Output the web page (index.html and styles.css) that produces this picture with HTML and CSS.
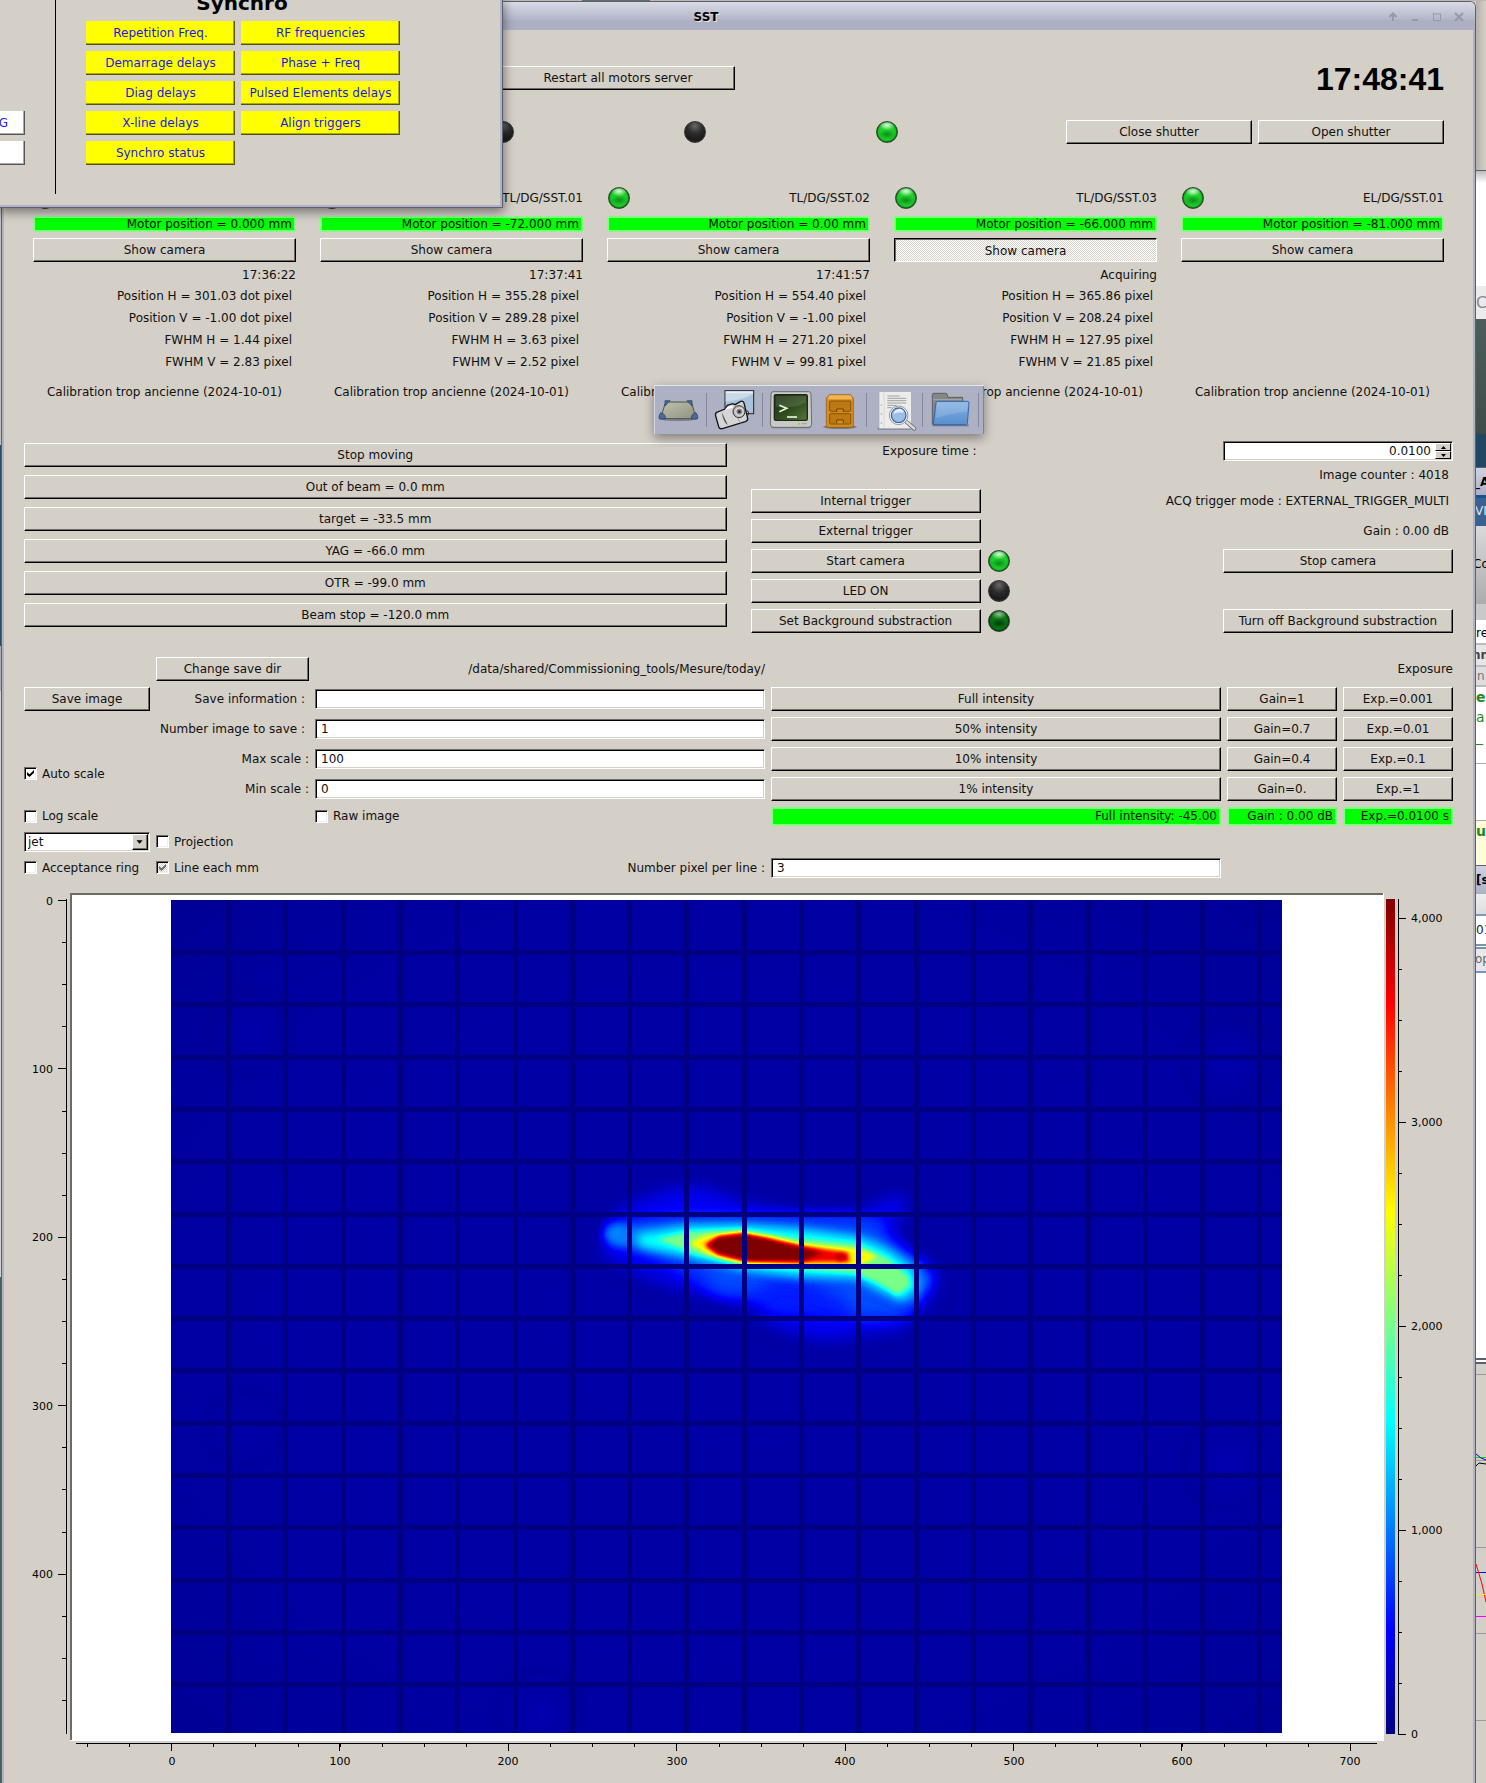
FILE: index.html
```html
<!DOCTYPE html>
<html lang="en">
<head>
<meta charset="utf-8">
<title>SST</title>
<link rel="stylesheet" href="styles.css">
</head>
<body>
<div class="desktop">
  <div class="edge-top"></div>
  <div class="edge-left"></div>

  <main class="window">
    <header class="titlebar">
      <h1 class="title">SST</h1>
      <div class="window-controls">
        <button aria-label="Shade"><svg viewBox="0 0 10 10"><path d="M5 9V2M1.5 5L5 1.5L8.5 5"/></svg></button>
        <button aria-label="Minimize"><svg viewBox="0 0 10 10"><path d="M2 8H8"/></svg></button>
        <button aria-label="Maximize"><svg viewBox="0 0 10 10"><path d="M1.5 1V8.5H8.5V2H1.5" stroke-width="1"/></svg></button>
        <button aria-label="Close"><svg viewBox="0 0 10 10"><path d="M1 1L9 9M9 1L1 9"/></svg></button>
      </div>
    </header>

    <div class="content">
      <section class="status">
        <div class="restart-row">
          <button class="btn restart">Restart all motors server</button>
          <time class="clock">17:48:41</time>
        </div>
        <div class="shutter-row">
          <span class="led led-off at-third"></span>
          <span class="led led-off"></span>
          <span class="led led-on"></span>
          <button class="btn">Close shutter</button>
          <button class="btn">Open shutter</button>
        </div>
        <div class="cameras">
          <article class="camera">
            <div class="camera-head"><span class="led led-off"></span></div>
            <p class="reading">Motor position = 0.000 mm</p>
            <button class="btn">Show camera</button>
            <p class="state">17:36:22</p>
            <p class="measure">Position H = 301.03 dot pixel</p>
            <p class="measure">Position V = -1.00 dot pixel</p>
            <p class="measure">FWHM H = 1.44 pixel</p>
            <p class="measure">FWHM V = 2.83 pixel</p>
            <p class="calibration">Calibration trop ancienne (2024-10-01)</p>
          </article>
          <article class="camera">
            <div class="camera-head"><span class="led led-off"></span><span>TL/DG/SST.01</span></div>
            <p class="reading">Motor position = -72.000 mm</p>
            <button class="btn">Show camera</button>
            <p class="state">17:37:41</p>
            <p class="measure">Position H = 355.28 pixel</p>
            <p class="measure">Position V = 289.28 pixel</p>
            <p class="measure">FWHM H = 3.63 pixel</p>
            <p class="measure">FWHM V = 2.52 pixel</p>
            <p class="calibration">Calibration trop ancienne (2024-10-01)</p>
          </article>
          <article class="camera">
            <div class="camera-head"><span class="led led-on"></span><span>TL/DG/SST.02</span></div>
            <p class="reading">Motor position = 0.00 mm</p>
            <button class="btn">Show camera</button>
            <p class="state">17:41:57</p>
            <p class="measure">Position H = 554.40 pixel</p>
            <p class="measure">Position V = -1.00 pixel</p>
            <p class="measure">FWHM H = 271.20 pixel</p>
            <p class="measure">FWHM V = 99.81 pixel</p>
            <p class="calibration">Calibration trop ancienne (2024-10-01)</p>
          </article>
          <article class="camera">
            <div class="camera-head"><span class="led led-on"></span><span>TL/DG/SST.03</span></div>
            <p class="reading">Motor position = -66.000 mm</p>
            <button class="btn pressed" aria-pressed="true">Show camera</button>
            <p class="state">Acquiring</p>
            <p class="measure">Position H = 365.86 pixel</p>
            <p class="measure">Position V = 208.24 pixel</p>
            <p class="measure">FWHM H = 127.95 pixel</p>
            <p class="measure">FWHM V = 21.85 pixel</p>
            <p class="calibration">Calibration trop ancienne (2024-10-01)</p>
          </article>
          <article class="camera">
            <div class="camera-head"><span class="led led-on"></span><span>EL/DG/SST.01</span></div>
            <p class="reading">Motor position = -81.000 mm</p>
            <button class="btn">Show camera</button>
            <p class="calibration last">Calibration trop ancienne (2024-10-01)</p>
          </article>
        </div>
      </section>

      <section class="controls">
        <div class="positions">
          <button class="btn">Stop moving</button>
          <button class="btn">Out of beam = 0.0 mm</button>
          <button class="btn">target = -33.5 mm</button>
          <button class="btn">YAG = -66.0 mm</button>
          <button class="btn">OTR = -99.0 mm</button>
          <button class="btn">Beam stop = -120.0 mm</button>
        </div>
        <div class="acquisition">
          <label class="text-right" for="exposure">Exposure time :</label>
          <div class="field spinbox c3">
            <input id="exposure" type="text" value="0.0100">
            <div class="spinner">
              <button aria-label="Increase"><svg viewBox="0 0 5 3"><path d="M0 3L2.500 0L5 3z"/></svg></button>
              <button aria-label="Decrease"><svg viewBox="0 0 5 3"><path d="M0 0L2.500 3L5 0z"/></svg></button>
            </div>
          </div>
          <p class="text-right c3">Image counter : 4018</p>
          <button class="btn c1">Internal trigger</button>
          <p class="text-right wide">ACQ trigger mode : EXTERNAL_TRIGGER_MULTI</p>
          <button class="btn c1">External trigger</button>
          <p class="text-right c3">Gain : 0.00 dB</p>
          <button class="btn c1">Start camera</button>
          <span class="led led-on"></span>
          <button class="btn">Stop camera</button>
          <button class="btn c1">LED ON</button>
          <span class="led led-off"></span>
          <button class="btn c1">Set Background substraction</button>
          <span class="led led-dim"></span>
          <button class="btn">Turn off Background substraction</button>
        </div>
      </section>

      <section class="settings">
        <button class="btn k2 r1">Change save dir</button>
        <p class="path k3 r1">/data/shared/Commissioning_tools/Mesure/today/</p>
        <p class="path k6 r1">Exposure</p>

        <button class="btn k1 r2">Save image</button>
        <label class="text-right k2 r2" for="info">Save information :</label>
        <input class="field k3 r2" id="info" type="text">
        <button class="btn k4 r2">Full intensity</button>
        <button class="btn k5 r2">Gain=1</button>
        <button class="btn k6 r2">Exp.=0.001</button>

        <label class="text-right k2 r3" for="count">Number image to save :</label>
        <input class="field k3 r3" id="count" type="text" value="1">
        <button class="btn k4 r3">50% intensity</button>
        <button class="btn k5 r3">Gain=0.7</button>
        <button class="btn k6 r3">Exp.=0.01</button>

        <label class="check k1 r45"><input type="checkbox" checked>Auto scale</label>
        <label class="path k2 r4" for="max">Max scale :</label>
        <input class="field k3 r4" id="max" type="text" value="100">
        <button class="btn k4 r4">10% intensity</button>
        <button class="btn k5 r4">Gain=0.4</button>
        <button class="btn k6 r4">Exp.=0.1</button>

        <label class="path k2 r5" for="min">Min scale :</label>
        <input class="field k3 r5" id="min" type="text" value="0">
        <button class="btn k4 r5">1% intensity</button>
        <button class="btn k5 r5">Gain=0.</button>
        <button class="btn k6 r5">Exp.=1</button>

        <label class="check k1 r6"><input type="checkbox">Log scale</label>
        <label class="check k3 r6"><input type="checkbox">Raw image</label>
        <p class="reading k4 r6">Full intensity: -45.00</p>
        <p class="reading k5 r6">Gain : 0.00 dB</p>
        <p class="reading k6 r6">Exp.=0.0100 s</p>

        <div class="combo k1 r7">
          <select class="field" aria-label="Colour map"><option>jet</option></select>
          <svg class="combo-arrow" viewBox="0 0 16 16"><path d="M4 6H11L7.500 10z"/></svg>
        </div>
        <label class="check k2 r7"><input type="checkbox">Projection</label>

        <label class="check k1 r8"><input type="checkbox">Acceptance ring</label>
        <label class="check k2 r8"><input class="partial" type="checkbox" checked>Line each mm</label>
        <label class="path k3 r8" for="pixels">Number pixel per line :</label>
        <input class="field k4 r8" id="pixels" type="text" value="3">
      </section>

      <svg class="plot" viewBox="24 886 1429 889" role="img" aria-label="Beam image with colour scale">
        <defs>
          <linearGradient id="jet-scale" x1="0" y1="1" x2="0" y2="0">
            <stop offset="0" stop-color="#000080"/>
            <stop offset=".125" stop-color="#0000ff"/>
            <stop offset=".375" stop-color="#00ffff"/>
            <stop offset=".625" stop-color="#ffff00"/>
            <stop offset=".875" stop-color="#ff0000"/>
            <stop offset="1" stop-color="#800000"/>
          </linearGradient>
          <radialGradient id="floor" cx=".5" cy=".5" r=".7">
            <stop offset="0" stop-color="#0a0a0a"/>
            <stop offset=".7" stop-color="#090909"/>
            <stop offset="1" stop-color="#060606"/>
          </radialGradient>
          <filter id="jet-map" filterUnits="userSpaceOnUse" x="171" y="900" width="1111" height="833" color-interpolation-filters="sRGB">
            <feComponentTransfer>
              <feFuncR type="table" tableValues="0 0 0 0 .5 1 1 1 .5"/>
              <feFuncG type="table" tableValues="0 0 .5 1 1 1 .5 0 0"/>
              <feFuncB type="table" tableValues=".5 1 1 1 .5 0 0 0 0"/>
            </feComponentTransfer>
          </filter>
          <filter id="blur-l" x="-20%" y="-30%" width="140%" height="160%" color-interpolation-filters="sRGB"><feGaussianBlur stdDeviation="24"/></filter>
          <filter id="blur-m" x="-80%" y="-80%" width="260%" height="260%" color-interpolation-filters="sRGB"><feGaussianBlur stdDeviation="14"/></filter>
          <filter id="blur-s" x="-50%" y="-50%" width="200%" height="200%" color-interpolation-filters="sRGB"><feGaussianBlur stdDeviation="6"/></filter>
        </defs>

        <rect x="70" y="893" width="1314" height="848" fill="#fff"/>
        <path d="M70 894H1383M71 893V1740" fill="none" stroke="#6f6a65" stroke-width="2"/>

        <g filter="url(#jet-map)">
          <rect x="171" y="900" width="1111" height="833" fill="url(#floor)"/>
          <g fill="#0f0f0f" filter="url(#blur-m)">
            <circle cx="250" cy="1033" r="16"/><circle cx="1228" cy="1062" r="18"/><circle cx="1228" cy="1464" r="18"/><circle cx="540" cy="1715" r="18"/><circle cx="245" cy="1428" r="12"/>
          </g>
          <g transform="translate(560 1150) scale(.33333)">
            <path fill="#1e1e1e" filter="url(#blur-l)" d="M130 250L180 175L320 120L420 110L560 160L700 190L900 185L1010 135L1045 150L1000 240L1060 310L1140 370L1125 430L1080 490L1020 540L780 570L650 530L560 470L400 430L250 375L130 320z"/>
            <path fill="#272727" filter="url(#blur-m)" d="M135 220L200 202L330 184L560 192L900 192L965 196L978 265L1065 322L1120 390L1090 440L1050 495L920 518L830 508L760 496L640 490L580 455L450 428L380 390L300 335L145 292z"/>
            <path fill="#343434" filter="url(#blur-l)" d="M400 205H700L940 220L1010 300L1080 345L1110 390L1070 435L1030 495L900 500L840 440L720 385L640 385L590 420L480 430L420 360L250 300L200 240z"/>
            <ellipse cx="172" cy="252" rx="38" ry="27" fill="#464646" filter="url(#blur-m)"/>
            <path fill="#404040" filter="url(#blur-m)" d="M160 235L400 220L560 224L760 236L940 262L1066 340L1104 392L1060 460L960 430L880 392L700 384L540 366L380 326L160 280z"/>
            <path fill="#626262" filter="url(#blur-m)" d="M230 256L380 230L540 226L720 240L890 262L980 300L1050 350L1072 412L1022 452L960 418L890 382L720 376L560 358L400 320L240 288z"/>
            <path fill="#7e7e7e" filter="url(#blur-s)" d="M290 268L390 245L540 238L720 266L890 282L980 323L1047 380L1048 410L1012 434L950 397L880 368L720 358L540 345L400 309z"/>
            <path fill="#a3a3a3" filter="url(#blur-s)" d="M388 278L440 256L540 246L640 260L720 281L890 297L950 318L920 336L880 349L720 345L540 336L440 311z"/>
            <path fill="#e4e4e4" filter="url(#blur-s)" d="M432 284L480 260L550 253L620 269L720 287L864 308L868 336L800 335L720 337L560 331L470 311z"/>
            <path fill="#fff" filter="url(#blur-s)" d="M442 284L474 262L545 253L620 266L720 292L785 309L730 333L560 333L480 313z"/>
            <path fill="#fff" filter="url(#blur-s)" d="M480 284L545 262L620 276L710 305L700 320L570 323L500 302z"/>
            <ellipse cx="842" cy="322" rx="14" ry="9" fill="#f4f4f4" filter="url(#blur-s)"/>
          </g>
        </g>
        <g stroke="#000080" shape-rendering="crispEdges">
          <path d="M226 1316.500H1282" stroke-width="833" stroke-dasharray="5 52.300"/>
          <path d="M726.500 950V1733" stroke-width="1111" stroke-dasharray="5 47.300"/>
        </g>

        <rect x="1386" y="899" width="9" height="835" fill="url(#jet-scale)"/>

        <g stroke="#000" shape-rendering="crispEdges">
          <path d="M66.500 899V1734"/>
          <path d="M64 900V1734" stroke-width="4" stroke-dasharray="1 41.100"/>
          <path d="M62 900V1734" stroke-width="8" stroke-dasharray="1 167.400"/>
          <path d="M76 1743.500H1377"/>
          <path d="M87 1745.500H1377" stroke-width="3" stroke-dasharray="1 41.100"/>
          <path d="M171 1747.500H1377" stroke-width="7" stroke-dasharray="1 167.400"/>
          <path d="M1398.500 899V1735"/>
          <path d="M1400.500 918V1735" stroke-width="3" stroke-dasharray="1 50"/>
          <path d="M1402.500 918V1735" stroke-width="7" stroke-dasharray="1 203"/>
        </g>
        <g class="scale end">
          <text x="53" y="905">0</text><text x="53" y="1073">100</text><text x="53" y="1241">200</text><text x="53" y="1410">300</text><text x="53" y="1578">400</text>
        </g>
        <g class="scale middle">
          <text x="172" y="1765">0</text><text x="340" y="1765">100</text><text x="508" y="1765">200</text><text x="677" y="1765">300</text><text x="845" y="1765">400</text><text x="1014" y="1765">500</text><text x="1182" y="1765">600</text><text x="1350" y="1765">700</text>
        </g>
        <g class="scale">
          <text x="1411" y="922">4,000</text><text x="1411" y="1126">3,000</text><text x="1411" y="1330">2,000</text><text x="1411" y="1534">1,000</text><text x="1411" y="1738">0</text>
        </g>
      </svg>
    </div>
  </main>

  <aside class="edge-right">
    <div class="s-panel"></div>
    <div class="s-blank"></div>
    <div class="s-tab">C</div>
    <div class="s-green"></div>
    <div class="s-navy"></div>
    <div class="s-title">_A</div>
    <div class="s-menu">VI</div>
    <div class="s-tools">Co</div>
    <div class="s-line s-re">re</div>
    <div class="s-line s-nn">nn</div>
    <div class="s-line s-n">n</div>
    <div class="s-code"><b>e</b><span>a</span><span>_</span></div>
    <div class="s-white"></div>
    <div class="s-yellow"><b>u</b></div>
    <div class="s-title s-low">[s</div>
    <div class="s-bar"></div>
    <div class="s-line s-zero">01</div>
    <div class="s-line s-op">op</div>
    <div class="s-doc"></div>
    <svg class="s-chart" viewBox="0 0 10 418" fill="none">
      <path stroke="#9a9a9e" d="M0 10.500H10M0 96.500H10M0 183.500H10M0 269.500H10M0 356.500H10"/>
      <path stroke="#00e000" d="M0 93.500H10"/><path stroke="#0000ff" d="M0 90L5 94L10 96M0 208.500H10"/>
      <path stroke="#000" d="M0 102L3 99L10 100"/><path stroke="#f00" d="M0 200L6 220L10 238"/>
      <path stroke="#f4f400" d="M0 230.500H10"/><path stroke="#f0f" d="M0 252.500H10"/>
    </svg>
  </aside>

  <section class="popup">
    <div class="popup-left">
      <button class="btn white-btn">G</button>
      <button class="btn white-btn" aria-label="More"></button>
    </div>
    <div class="popup-main">
      <h2>Synchro</h2>
      <div class="popup-grid">
        <button class="btn">Repetition Freq.</button>
        <button class="btn">RF frequencies</button>
        <button class="btn">Demarrage delays</button>
        <button class="btn">Phase + Freq</button>
        <button class="btn">Diag delays</button>
        <button class="btn">Pulsed Elements delays</button>
        <button class="btn">X-line delays</button>
        <button class="btn">Align triggers</button>
        <button class="btn">Synchro status</button>
      </div>
    </div>
  </section>

  <nav class="dock" aria-label="Launcher">
    <button aria-label="Show desktop"><svg width="50" height="48" viewBox="500 1158 150 144">
      <defs><linearGradient id="pad" x1="0" y1="0" x2="1" y2="1"><stop offset="0" stop-color="#bfc2ae"/><stop offset="1" stop-color="#8f927e"/></linearGradient></defs>
      <ellipse cx="567" cy="1257" rx="55" ry="6" fill="#7d8094"/>
      <path d="M535 1206H600Q606 1206 608 1212L618 1248Q619 1256 611 1256H523Q515 1256 516 1248L527 1212Q529 1206 535 1206z" fill="url(#pad)" stroke="#4f5245" stroke-width="3"/>
      <g fill="#4a6a9c" stroke="#223a63" stroke-width="2"><path d="M527 1202H542L527 1218zM593 1202H608V1218zM514 1238Q530 1242 528 1257H510Q506 1250 514 1238zM620 1238Q604 1242 606 1257H624Q629 1250 620 1238z"/></g>
    </svg></button>
    <hr>
    <button aria-label="Screenshot"><svg width="55" height="48" viewBox="651 1158 165 144">
      <rect x="705" y="1172" width="86" height="69" fill="#a9c3dc" stroke="#222" stroke-width="3"/>
      <path d="M707 1174H789V1181H707z" fill="#e9eef4"/><path d="M707 1205Q760 1200 789 1182V1181H707z" fill="#c8dae9"/>
      <path d="M680 1237L705 1227L712 1216L728 1211L735 1214L752 1204Q759 1202 762 1209L773 1255Q774 1262 766 1265L697 1286Q689 1288 686 1280L677 1248Q675 1240 680 1237z" fill="#d5d5d5" stroke="#151515" stroke-width="4"/>
      <path d="M695 1236L714 1276Q700 1268 695 1236z" fill="#555"/><path d="M704 1229L728 1223L726 1217L712 1221z" fill="#fff"/>
      <circle cx="747" cy="1235" r="18" fill="#bbb" stroke="#333" stroke-width="3"/><circle cx="748" cy="1235" r="11" fill="#888" stroke="#eee" stroke-width="3"/><circle cx="748" cy="1235" r="4" fill="#222"/>
      <path d="M739 1249L755 1274" stroke="#888" stroke-width="2"/><path d="M770 1232Q779 1234 774 1246" fill="none" stroke="#222" stroke-width="3"/>
    </svg></button>
    <hr>
    <button aria-label="Terminal"><svg width="52" height="48" viewBox="819 1158 156 144">
      <defs><linearGradient id="crt" x1="0" y1="0" x2="1" y2="1"><stop offset="0" stop-color="#1b2e10"/><stop offset=".5" stop-color="#2d4a1c"/><stop offset="1" stop-color="#55753a"/></linearGradient></defs>
      <path d="M845 1283H961" stroke="#71748a" stroke-width="4"/>
      <path d="M850 1175H956Q963 1175 963 1182L965 1272Q965 1282 955 1282H851Q841 1282 841 1272L843 1182Q843 1175 850 1175z" fill="#c9cac4" stroke="#6b6d69" stroke-width="3"/>
      <rect x="853" y="1184" width="99" height="77" rx="4" fill="url(#crt)" stroke="#22261e" stroke-width="4"/>
      <path d="M857 1188H948V1207Q900 1230 857 1219z" fill="#fff" opacity=".12"/>
      <path d="M868 1216L890 1225L868 1235" fill="none" stroke="#e4f5dc" stroke-width="5"/><path d="M891 1251H921" stroke="#e4f5dc" stroke-width="5"/>
      <circle cx="927" cy="1271" r="3" fill="#7bd32a"/><path d="M935 1271H950" stroke="#888" stroke-width="2"/>
    </svg></button>
    <button aria-label="Files"><svg width="51" height="48" viewBox="975 1158 153 144">
      <ellipse cx="1050" cy="1281" rx="50" ry="6" fill="#777a8e"/>
      <path d="M1018 1184H1082L1090 1195V1282H1009V1195z" fill="#d68d1b" stroke="#8a5509" stroke-width="2"/>
      <path d="M1018 1186H1082L1088 1198H1012z" fill="#f2b556"/>
      <g fill="#bd7912" stroke="#885208" stroke-width="3"><rect x="1019" y="1203" width="63" height="31" rx="3"/><rect x="1019" y="1241" width="63" height="31" rx="3"/></g>
      <path d="M1040 1235V1227H1060V1235M1040 1270V1260H1060V1270" fill="#d68d1b" stroke="#704204" stroke-width="3"/>
    </svg></button>
    <hr>
    <button aria-label="Search"><svg width="55" height="48" viewBox="1131 1158 165 144">
      <path d="M1163 1286H1262" stroke="#6d7083" stroke-width="5"/>
      <rect x="1167" y="1175" width="97" height="111" fill="#ececea" stroke="#aaa" stroke-width="2"/><path d="M1182 1176V1285" stroke="#ccc" stroke-width="2"/>
      <path d="M1192 1188H1229M1192 1195H1249M1192 1202H1249M1192 1209H1249M1192 1216H1220M1192 1223H1206" stroke="#a2a2a0" stroke-width="3"/><path d="M1172 1215h4M1172 1242h4M1172 1269h4" stroke="#999" stroke-width="3"/>
      <path d="M1250 1266L1273 1286" stroke="#666" stroke-width="12" stroke-linecap="round"/><path d="M1250 1266L1273 1286" stroke="#ddd" stroke-width="7" stroke-linecap="round"/>
      <circle cx="1226" cy="1246" r="28" fill="#f7f7f5" stroke="#999" stroke-width="3"/><circle cx="1226" cy="1246" r="22" fill="#9dbfe6" stroke="#3c6bab" stroke-width="4"/><path d="M1210 1242Q1214 1226 1232 1226Q1244 1232 1240 1238Q1222 1234 1210 1242z" fill="#e3eefa"/>
    </svg></button>
    <hr>
    <button aria-label="Folder"><svg width="55" height="48" viewBox="1299 1158 165 144">
      <defs><linearGradient id="blue" x1="0" y1="0" x2="0" y2="1"><stop offset="0" stop-color="#83b1e2"/><stop offset="1" stop-color="#588fce"/></linearGradient></defs>
      <path d="M1328 1276H1436" stroke="#6f7389" stroke-width="5"/>
      <path d="M1327 1273V1184Q1327 1180 1332 1180H1367Q1371 1180 1372 1185L1374 1192H1418V1270z" fill="#858787" stroke="#5d5f60" stroke-width="3"/><path d="M1330 1199H1416" stroke="#a9abab" stroke-width="3"/>
      <path d="M1342 1204H1433Q1437 1204 1437 1208L1432 1270Q1431 1274 1427 1274H1334Q1329 1274 1330 1270L1338 1208Q1338 1204 1342 1204z" fill="url(#blue)" stroke="#3567a6" stroke-width="3"/>
      <path d="M1341 1207H1434L1431 1235Q1390 1237 1337 1255z" fill="#fff" opacity=".15"/>
    </svg></button>
    <hr>
  </nav>
</div>
</body>
</html>
```
FILE: styles.css
```css
* { box-sizing: border-box; }

:root {
  --face: #d4cfc7;
  --shade: #6f6a65;
  --frame: #afb2c4;
  --frame-dark: #5b5f72;
}

body {
  margin: 0;
  background: var(--face);
  color: #111;
  font: 12px/16px "DejaVu Sans", sans-serif;
}

p, h1, h2 { margin: 0; }

button, input, select {
  font: inherit;
  color: inherit;
}

.desktop {
  position: relative;
  display: grid;
  grid-template-columns: 1px minmax(0, 1fr) 10px;
  grid-template-rows: 1px auto;
  min-height: 100vh;
  overflow: hidden;
}

.edge-top {
  grid-column: 1 / -1;
  background: linear-gradient(90deg, #bcb8b0 582px, #5f7268 582px 650px, #bcb8b0 650px);
}

.edge-left {
  background: linear-gradient(#c4c0b9 444px, #2c4c60 444px 645px, #aeb0ae 645px 690px, #d4cfc7 690px 1276px, #4a5f5b 1276px);
}

/* Main window */

.window {
  border: solid var(--frame-dark);
  border-width: 1px 1px 0;
  border-radius: 0 6px 0 0;
  background: var(--face);
  display: flex;
  flex-direction: column;
  overflow: hidden;
}

.titlebar {
  display: flex;
  align-items: center;
  height: 28px;
  padding: 1px 5px 0 28px;
  background: linear-gradient(#d8dbe4, #b2b5c8 18px, #adb0c3 18px);
}

.title {
  flex: 1;
  text-align: center;
  font-size: 12px;
  color: #000;
  text-shadow: 1px 1px #e4e6ee;
}

.window-controls { display: flex; }

.window-controls button {
  width: 22px;
  height: 22px;
  padding: 6px;
  border: 0;
  background: none;
  display: flex;
}

.window-controls svg {
  width: 10px;
  height: 10px;
  fill: none;
  stroke: #979aa3;
  stroke-width: 2;
}

.content {
  flex: 1;
  padding: 35px 20px 6px;
  border: solid var(--frame);
  border-width: 0 2px;
}

/* Controls shared by all panels */

.btn {
  height: 24px;
  width: 100%;
  padding: 0 4px;
  border: 1px solid;
  border-color: #fff #000 #000 #fff;
  border-radius: 0;
  background: var(--face);
  box-shadow: inset -1px -1px var(--shade);
  line-height: 16px;
  white-space: nowrap;
}

.btn.pressed {
  padding: 2px 4px 0;
  border-color: #000 #fff #fff #000;
  box-shadow: inset 1px 1px var(--shade);
  background: repeating-conic-gradient(#fff 0 25%, #d4cfc7 0 50%) 0 0 / 2px 2px;
}

.field {
  width: 100%;
  height: 20px;
  padding: 0 5px;
  border: 1px solid;
  border-color: var(--shade) #fff #fff var(--shade);
  border-radius: 0;
  background: #fff;
  box-shadow: inset 1px 1px #000, inset -1px -1px var(--face);
}

.reading {
  border: 2px solid #80ff80;
  background: #0f0;
  height: 16px;
  padding: 0 2px;
  line-height: 12px;
  text-align: right;
  white-space: nowrap;
}

.text-right {
  padding-right: 4px;
  text-align: right;
  white-space: nowrap;
}

.led {
  display: block;
  width: 22px;
  height: 22px;
  border-radius: 50%;
  border: 1px solid #333;
}

.led-off {
  background: radial-gradient(circle at 50% 20%, #686868, #2c2c2c 40%, #1a1a1a 75%, #444);
}

.led-on {
  border-color: #2d4d2d;
  background:
    radial-gradient(ellipse 8px 5px at 50% 16%, #dfffe0, transparent),
    radial-gradient(ellipse 9px 5px at 50% 62%, #0c8c18, transparent),
    radial-gradient(circle, #1ed02c 50%, #18ba25 62%, #064e0c 72%);
}

.led-dim {
  border-color: #2d3d2d;
  background:
    radial-gradient(ellipse 8px 5px at 50% 16%, #8fc494, transparent),
    radial-gradient(ellipse 9px 5px at 50% 62%, #033c08, transparent),
    radial-gradient(circle, #097815 50%, #086512 62%, #02300a 72%);
}

/* Status of the stations */

.status { padding: 0 9px; }

.restart-row {
  display: grid;
  grid-template-columns: 468fr 234fr 709fr;
  align-items: center;
  height: 24px;
}

.restart { grid-column: 2; }

.clock {
  justify-self: end;
  padding-top: 2px;
  font: bold 32px/24px "Liberation Sans", sans-serif;
  color: #000;
}

.shutter-row {
  display: grid;
  grid-template-columns: 67fr repeat(7, 186fr);
  column-gap: 6px;
  align-items: center;
  margin-top: 31px;
}

.shutter-row .led { margin-left: 2px; }
.at-third { grid-column: 4; }

.cameras {
  display: grid;
  grid-template-columns: repeat(5, minmax(0, 1fr));
  column-gap: 24px;
  margin-top: 42px;
}

.camera {
  display: flex;
  flex-direction: column;
  gap: 6px;
  text-align: right;
}

.camera-head {
  display: flex;
  justify-content: space-between;
  align-items: center;
  height: 24px;
  padding-left: 1px;
}

.state { line-height: 14px; }
.measure { padding-right: 4px; }

.calibration {
  margin-top: 8px;
  text-align: center;
  white-space: nowrap;
}

.calibration.last { margin-top: auto; }

/* Motor and camera commands */

.controls {
  display: grid;
  grid-template-columns: minmax(0, 1fr) minmax(0, 1fr);
  column-gap: 24px;
  margin-top: 41px;
}

.positions {
  display: flex;
  flex-direction: column;
  gap: 8px;
  padding-top: 2px;
}

.acquisition {
  display: grid;
  grid-template-columns: repeat(3, minmax(0, 1fr));
  gap: 6px;
  align-items: center;
}

.acquisition .led { margin-left: 1px; }
.c1 { grid-column: 1; }
.c3 { grid-column: 3; }
.wide { grid-column: 2 / 4; }

.spinbox {
  display: flex;
  padding: 1px;
}

.spinbox input {
  flex: 1;
  min-width: 0;
  padding: 0 4px;
  border: 0;
  background: none;
  text-align: right;
}

.spinner {
  display: flex;
  flex-direction: column;
  width: 16px;
}

.spinner button {
  flex: 1;
  display: grid;
  place-items: center;
  padding: 0;
  min-height: 0;
  border: 1px solid;
  border-color: #fff #000 #000 #fff;
  background: var(--face);
}

.spinner svg { width: 5px; height: 3px; }

/* Saving and display settings */

.settings {
  display: grid;
  grid-template-columns: 126fr 153fr 450fr 450fr 110fr 110fr;
  grid-template-rows: repeat(5, 24px) 19px 20px 20px;
  gap: 6px;
  align-items: center;
  margin-top: 24px;
}

.k1 { grid-column: 1; }
.k2 { grid-column: 2; }
.k3 { grid-column: 3; }
.k4 { grid-column: 4; }
.k5 { grid-column: 5; }
.k6 { grid-column: 6; }
.r1 { grid-row: 1; }
.r2 { grid-row: 2; }
.r3 { grid-row: 3; }
.r4 { grid-row: 4; }
.r45 { grid-row: 4 / 6; }
.r5 { grid-row: 5; }
.r6 { grid-row: 6; }
.r7 { grid-row: 7; }
.r8 { grid-row: 8; }

.settings > * { min-width: 0; }

.settings .reading {
  height: 19px;
  line-height: 15px;
}

.path {
  text-align: right;
  white-space: nowrap;
}

.check {
  display: flex;
  align-items: center;
  gap: 5px;
  padding-bottom: 1px;
  white-space: nowrap;
}

.check input {
  appearance: none;
  width: 13px;
  height: 13px;
  margin: 0;
  border: 1px solid;
  border-color: var(--shade) #fff #fff var(--shade);
  background: #fff;
  box-shadow: inset 1px 1px #000, inset -1px -1px #eee;
}

.check input:checked::after {
  content: "";
  display: block;
  width: 7px;
  height: 7px;
  margin: 2px;
  background: #000;
  clip-path: polygon(0 28%, 36% 60%, 100% 0, 100% 40%, 36% 100%, 0 70%);
}

.check input.partial {
  background: repeating-conic-gradient(#fff 0 25%, #d4cfc7 0 50%) 0 0 / 2px 2px;
}

.check input.partial:checked::after { background: var(--shade); }

.combo { display: grid; }

.combo select {
  grid-area: 1 / 1;
  appearance: none;
  padding: 0 3px;
}

.combo-arrow {
  grid-area: 1 / 1;
  justify-self: end;
  align-self: center;
  width: 16px;
  height: 16px;
  margin-right: 2px;
  border: 1px solid;
  border-color: #fff #000 #000 #fff;
  background: var(--face);
  box-shadow: inset -1px -1px var(--shade);
  pointer-events: none;
}

/* Beam image */

.plot {
  display: block;
  width: 100%;
  height: auto;
  margin-top: 8px;
}

.scale { font-size: 11px; }
.end { text-anchor: end; }
.middle { text-anchor: middle; }

/* Synchro window, in front of the main one */

.popup {
  position: absolute;
  left: 0;
  top: 0;
  width: 503px;
  height: 208px;
  display: flex;
  background: var(--face);
  border: solid var(--frame-dark);
  border-width: 0 1px 1px 0;
  box-shadow: inset -2px -2px var(--frame), 0 3px 10px 1px rgba(0, 0, 0, .45);
}

.popup-left {
  width: 56px;
  height: 194px;
  padding: 111px 30px 0 0;
  border-right: 1px solid #000;
  display: flex;
  flex-direction: column;
  gap: 6px;
  overflow: hidden;
}

.white-btn {
  display: flex;
  flex-shrink: 0;
  justify-content: flex-end;
  align-items: center;
  padding: 0 17px 0 0;
  border: 0;
  background: #fff;
  color: #1a1ae6;
  box-shadow: inset -1px -1px #555, inset -2px -2px #aaa;
}

.popup-main {
  display: flex;
  flex-direction: column;
  padding-left: 30px;
}

.popup-main h2 {
  height: 21px;
  width: 312px;
  font-size: 20px;
  line-height: 6px;
  text-align: center;
  color: #000;
}

.popup-grid {
  display: grid;
  grid-template-columns: 149px 159px;
  gap: 6px;
}

.popup-grid .btn {
  border: 0;
  background: #ff0;
  color: #1a1ae6;
  box-shadow: inset -1px -1px #550, inset -2px -2px #aa0;
}

/* Launcher bar */

.dock {
  position: absolute;
  left: 654px;
  top: 385px;
  height: 49px;
  padding: 0 5px 0 2px;
  display: flex;
  align-items: flex-start;
  background: #aeb1c3;
  border-top: 1px solid #e6e7ec;
  box-shadow: inset 1px 0 #d5d7e0, inset -1px 0 #7f8294, 0 4px 10px rgba(0, 0, 0, .4);
}

.dock button {
  display: block;
  padding: 0;
  border: 0;
  background: none;
}

.dock svg { display: block; }

.dock hr {
  width: 1px;
  height: 34px;
  margin: 7px 0 0;
  border: 0;
  background: #84879b;
}

/* Windows that show behind the right edge */

.edge-right {
  display: flex;
  flex-direction: column;
  overflow: hidden;
  white-space: nowrap;
}

.edge-right > * { flex-shrink: 0; overflow: hidden; }

.s-panel { height: 170px; background: linear-gradient(90deg, #b5b1aa, #d4cfc7); border-bottom: 1px solid var(--frame-dark); }
.s-blank { height: 115px; background: linear-gradient(#bbb, #fff 12px); }
.s-tab { height: 33px; background: #ebebeb; color: #8a8a8a; font-size: 16px; line-height: 34px; }
.s-green { height: 115px; background: linear-gradient(#4b5e5b, #3f4d49); }
.s-navy { height: 33px; background: #214762; }
.s-title { height: 28px; background: linear-gradient(#d0d3de, #adb0c3); border-top: 1px solid var(--frame-dark); color: #000; font-weight: bold; line-height: 28px; text-indent: -2px; }
.s-menu { height: 31px; background: #3a6291; border-top: 3px solid #16538f; color: #dfe6ee; line-height: 26px; text-indent: -1px; }
.s-tools { height: 94px; background: linear-gradient(#d9d9d9, #acacac 78px, #c9c9c9 78px); color: #000; line-height: 76px; text-indent: -3px; }
.s-line { background: #fff; border-bottom: 2px solid #bbb; }
.s-re { height: 25px; line-height: 26px; color: #000; }
.s-nn { height: 22px; background: #e6e6e8; font-weight: bold; color: #444; line-height: 20px; text-indent: -4px; }
.s-n { height: 20px; background: #ddd; color: #777; line-height: 18px; text-indent: 1px; }
.s-code { height: 77px; background: #fff; border-bottom: 1px solid #aaa; color: #1f8b1f; font-size: 14px; line-height: 20px; display: flex; flex-direction: column; }
.s-white { height: 57px; background: #fff; border-bottom: 1px solid #aaa; }
.s-yellow { height: 44px; background: #fdfdd9; color: #1f8b1f; font-size: 14px; line-height: 20px; }
.s-low { height: 29px; text-indent: 0; }
.s-bar { height: 22px; background: linear-gradient(#eee, #ddd); border-bottom: 2px solid #7d9bb5; }
.s-zero { height: 33px; color: #222; line-height: 28px; border-bottom: 5px double #7b93a8; }
.s-op { height: 24px; background: #e8e8ec; color: #666; line-height: 20px; text-indent: -1px; border-color: #7a93c0; }
.s-doc { height: 391px; background: #fff; border-bottom: 6px double var(--frame-dark); }
.s-chart { width: 10px; height: 418px; }
```
